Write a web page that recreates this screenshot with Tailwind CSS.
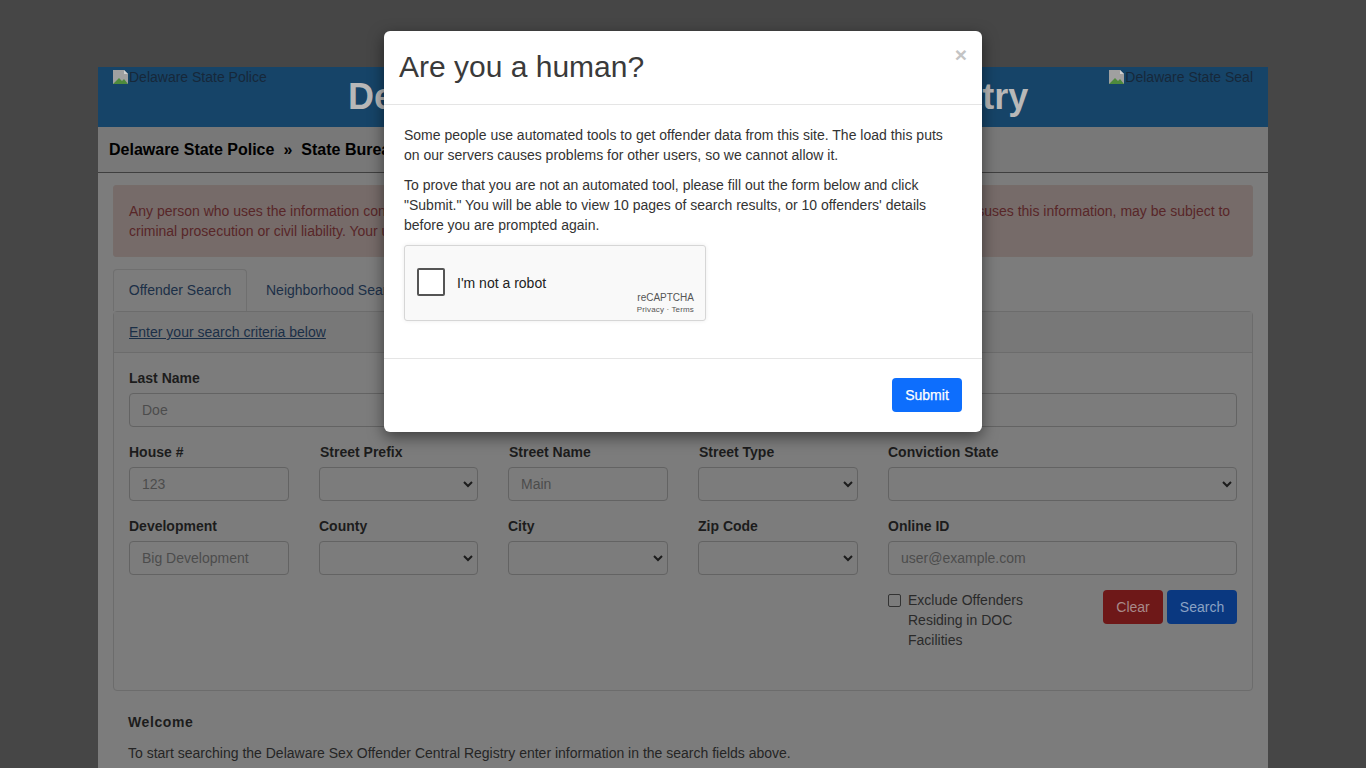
<!DOCTYPE html>
<html lang="en">
<head>
<meta charset="utf-8">
<title>Delaware Sex Offender Central Registry</title>
<script src="https://cdn.jsdelivr.net/npm/@tailwindcss/browser@4"></script>
</head>
<body class="relative h-[768px] overflow-hidden bg-[#464646] font-['Liberation_Sans',Arial,sans-serif] text-[14px] leading-[20px] text-[#1c1c1c]">
<div class="mx-auto mt-[67px] h-[701px] w-[1170px] overflow-hidden bg-[#7c7c7c]">
  <header class="flex h-[60px] items-start bg-[#164468] px-[15px] text-[#16283a]">
    <span class="flex h-[20px] items-center">
      <svg class="h-4 w-4 shrink-0" viewBox="0 0 16 16"><path d="M0 1h11l4 4v10H0z" fill="#a0a0a0"/><path d="M0 15l6-6 3 3 2-2 4 5z" fill="#4e8a3c"/><path d="M11 1v4h4" fill="#d0d0d0"/></svg>Delaware State Police
    </span>
    <h1 class="flex-1 text-center text-[36px] leading-[60px] font-bold text-[#b8b8b8]">Delaware Sex Offender Central Registry</h1>
    <span class="flex h-[20px] items-center">
      <svg class="h-4 w-4 shrink-0" viewBox="0 0 16 16"><path d="M0 1h11l4 4v10H0z" fill="#a0a0a0"/><path d="M0 15l6-6 3 3 2-2 4 5z" fill="#4e8a3c"/><path d="M11 1v4h4" fill="#d0d0d0"/></svg>Delaware State Seal
    </span>
  </header>
  <nav class="flex h-[46px] items-center border-b border-[#3f3f3f] bg-[#787878] pl-[11px] text-[16px] font-bold whitespace-nowrap text-black">
    Delaware State Police<span class="mx-[9px]">»</span>State Bureau of Identification<span class="mx-[9px]">»</span>Sex Offender Central Registry
  </nav>
  <main class="px-[15px] pt-[12px]">
    <div class="h-[72px] rounded-[3px] border border-[#766c69] bg-[#766b69] px-[15px] py-[15px] text-[#582628]">
      Any person who uses the information contained in this site to threaten, intimidate or harass any individual <span class="-mr-[4.7px]">in any way</span>, or who otherwise misuses this information, may be subject to criminal prosecution or civil liability. Your use of this site is an acknowledgment of these terms and of the applicable law.
    </div>
    <div class="mt-[12px] flex h-[42px] items-stretch">
      <span class="relative z-10 flex w-[134px] items-center justify-center rounded-t-[4px] border border-b-0 border-[#6f6f6f] bg-[#7c7c7c] pb-px text-[#1b2f47]">Offender Search</span>
      <span class="flex items-center px-[19px] text-[#1b2f47]">Neighborhood Search</span>
    </div>
    <section class="h-[380px] rounded-[4px] border border-[#6c6c6c]">
      <div class="flex h-[41px] items-center border-b border-[#6c6c6c] bg-[#787878] px-[15px]"><a class="text-[#1b2f47] underline">Enter your search criteria below</a></div>
      <div class="px-[15px] pt-[15px]">
        <div class="grid grid-cols-[345px_350px_349px] gap-x-[32px]">
          <label class="block"><span class="block font-bold">Last Name</span><span class="mt-[5px] flex h-[34px] items-center rounded-[4px] border border-[#636363] px-[12px] text-[#4c4c4c]">Doe</span></label>
          <label class="block"><span class="block font-bold">First Name</span><span class="mt-[5px] flex h-[34px] rounded-[4px] border border-[#636363]"></span></label>
          <label class="block"><span class="block font-bold">Middle Name</span><span class="mt-[5px] flex h-[34px] rounded-[4px] border border-[#636363]"></span></label>
        </div>
        <div class="mt-[15px] grid grid-cols-[160px_159px_160px_160px_349px] gap-x-[30px] gap-y-[15px]">
          <label class="block"><span class="block font-bold">House #</span><span class="mt-[5px] flex h-[34px] items-center rounded-[4px] border border-[#636363] px-[12px] text-[#4c4c4c]">123</span></label>
          <label class="block"><span class="block pl-px font-bold">Street Prefix</span><span class="mt-[5px] flex h-[34px] items-center justify-end rounded-[4px] border border-[#636363] pr-[1px]"><svg class="h-4 w-4" viewBox="0 0 16 16" fill="none" stroke="#1c1c1c" stroke-width="2"><path d="M4 6l4 4 4-4"/></svg></span></label>
          <label class="block"><span class="block pl-px font-bold">Street Name</span><span class="mt-[5px] flex h-[34px] items-center rounded-[4px] border border-[#636363] px-[12px] text-[#4c4c4c]">Main</span></label>
          <label class="block"><span class="block pl-px font-bold">Street Type</span><span class="mt-[5px] flex h-[34px] items-center justify-end rounded-[4px] border border-[#636363] pr-[1px]"><svg class="h-4 w-4" viewBox="0 0 16 16" fill="none" stroke="#1c1c1c" stroke-width="2"><path d="M4 6l4 4 4-4"/></svg></span></label>
          <label class="block"><span class="block font-bold">Conviction State</span><span class="mt-[5px] flex h-[34px] items-center justify-end rounded-[4px] border border-[#636363] pr-[1px]"><svg class="h-4 w-4" viewBox="0 0 16 16" fill="none" stroke="#1c1c1c" stroke-width="2"><path d="M4 6l4 4 4-4"/></svg></span></label>
          <label class="block"><span class="block font-bold">Development</span><span class="mt-[5px] flex h-[34px] items-center rounded-[4px] border border-[#636363] px-[12px] text-[#4c4c4c]">Big Development</span></label>
          <label class="block"><span class="block font-bold">County</span><span class="mt-[5px] flex h-[34px] items-center justify-end rounded-[4px] border border-[#636363] pr-[1px]"><svg class="h-4 w-4" viewBox="0 0 16 16" fill="none" stroke="#1c1c1c" stroke-width="2"><path d="M4 6l4 4 4-4"/></svg></span></label>
          <label class="block"><span class="block font-bold">City</span><span class="mt-[5px] flex h-[34px] items-center justify-end rounded-[4px] border border-[#636363] pr-[1px]"><svg class="h-4 w-4" viewBox="0 0 16 16" fill="none" stroke="#1c1c1c" stroke-width="2"><path d="M4 6l4 4 4-4"/></svg></span></label>
          <label class="block"><span class="block font-bold">Zip Code</span><span class="mt-[5px] flex h-[34px] items-center justify-end rounded-[4px] border border-[#636363] pr-[1px]"><svg class="h-4 w-4" viewBox="0 0 16 16" fill="none" stroke="#1c1c1c" stroke-width="2"><path d="M4 6l4 4 4-4"/></svg></span></label>
          <label class="block"><span class="block font-bold">Online ID</span><span class="mt-[5px] flex h-[34px] items-center rounded-[4px] border border-[#636363] px-[12px] text-[#4c4c4c]">user@example.com</span></label>
        </div>
        <div class="mt-[15px] flex justify-end">
          <div class="flex w-[349px] justify-between">
            <div class="flex w-[160px] items-start gap-[7px]">
              <span class="mt-[4px] h-[13px] w-[13px] shrink-0 rounded-[2px] border border-[#333]"></span>
              <span class="w-[125px] text-[#2a2a2a]">Exclude Offenders Residing in DOC Facilities</span>
            </div>
            <div class="flex h-[34px] gap-[4px]">
              <span class="flex w-[60px] items-center justify-center rounded-[4px] bg-[#6e1818] text-[#a88a8a]">Clear</span>
              <span class="flex w-[70px] items-center justify-center rounded-[4px] bg-[#0a3880] text-[#8aa2c4]">Search</span>
            </div>
          </div>
        </div>
      </div>
    </section>
    <div class="pl-[15px]">
      <h2 class="mt-[21px] font-bold tracking-[0.6px]">Welcome</h2>
      <p class="mt-[11px] text-[#252525]">To start searching the Delaware Sex Offender Central Registry enter information in the search fields above.</p>
    </div>
  </main>
</div>

<div class="absolute top-[31px] left-[384px] w-[598px] rounded-[6px] bg-white text-[#333] shadow-[0_5px_15px_rgba(0,0,0,0.5)]">
  <div class="relative h-[74px] border-b border-[#e5e5e5] px-[15px] py-[15px]">
    <h3 class="text-[30px] leading-[42px] font-normal text-[#3a3a3a]">Are you a human?</h3>
    <span class="absolute top-[13px] right-[15px] text-[21px] leading-[21px] font-bold text-[#c4c4c4]">×</span>
  </div>
  <div class="h-[253px] px-[20px] pt-[20px]">
    <p>Some people use automated tools to get offender data from this site. The load this puts on our servers causes problems for other users, so we cannot allow it.</p>
    <p class="mt-[10px]">To prove that you are not an automated tool, please fill out the form below and click "Submit." You will be able to view 10 pages of search results, or 10 offenders' details before you are prompted again.</p>
    <div class="relative mt-[10px] h-[76px] w-[302px] rounded-[3px] border border-[#d6d6d6] bg-[#f9f9f9] shadow-[0_0_4px_rgba(0,0,0,0.08)]">
      <span class="absolute top-[22px] left-[12px] h-[28px] w-[28px] rounded-[2px] border-2 border-[#555] bg-white"></span>
      <span class="absolute top-[27px] left-[52px] text-[14px] leading-[20px] text-[#222]">I'm not a robot</span>
      <span class="absolute top-[45px] right-[11px] text-[10px] leading-[14px] text-[#555]">reCAPTCHA</span>
      <span class="absolute top-[58px] right-[11px] text-[8px] leading-[12px] tracking-[0.15px] text-[#555]">Privacy · Terms</span>
    </div>
  </div>
  <div class="flex h-[74px] items-start justify-end border-t border-[#e5e5e5] pt-[19px] pr-[20px]">
    <button class="h-[34px] w-[70px] rounded-[4px] bg-[#0d6efd] text-[14px] font-normal text-white [-webkit-text-stroke:0.25px_white]">Submit</button>
  </div>
</div>
</body>
</html>
